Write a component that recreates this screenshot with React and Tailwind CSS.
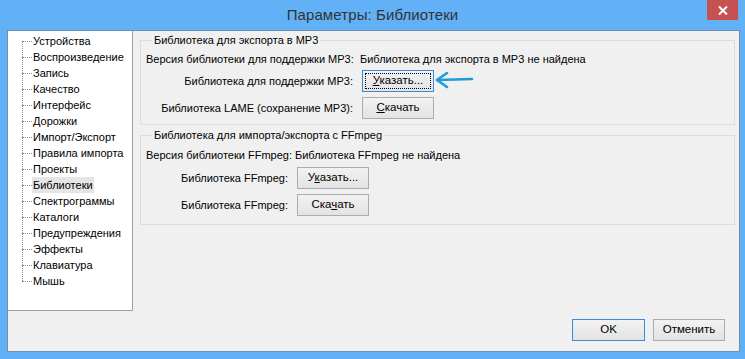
import React from "react";

const items = [
  "Устройства",
  "Воспроизведение",
  "Запись",
  "Качество",
  "Интерфейс",
  "Дорожки",
  "Импорт/Экспорт",
  "Правила импорта",
  "Проекты",
  "Библиотеки",
  "Спектрограммы",
  "Каталоги",
  "Предупреждения",
  "Эффекты",
  "Клавиатура",
  "Мышь",
];

function Btn({ children, focused, w = "w-[72px]" }) {
  return (
    <button
      className={
        (focused
          ? "border-[#3c8bd9] outline-1 outline-dotted outline-black outline-offset-[-4px] "
          : "border-[#acacac] ") +
        w +
        " h-[22px] border bg-linear-to-b from-[#f2f2f2] to-[#e3e3e3] text-[11.5px] text-black flex items-center justify-center leading-none"
      }
    >
      {children}
    </button>
  );
}

function Arrow() {
  return (
    <svg width="40" height="20" viewBox="0 0 40 20" className="ml-[1px] mt-[-3px]">
      <path
        d="M2 10 Q 18 9.5 37 9"
        fill="none"
        stroke="#1f9bd8"
        strokeWidth="2.6"
        strokeLinecap="round"
      />
      <path
        d="M12 3 L2 10 L12 17"
        fill="none"
        stroke="#1f9bd8"
        strokeWidth="2.6"
        strokeLinecap="round"
        strokeLinejoin="round"
      />
    </svg>
  );
}

export default function App() {
  return (
    <div className="w-[745px] h-[359px] bg-[#62b1f6] flex flex-col overflow-hidden font-['Liberation_Sans',sans-serif] text-[11px] text-black">
      <div className="h-[30px] relative flex items-center justify-center">
        <span className="text-[15px] text-[#333] tracking-[0.1px]">Параметры: Библиотеки</span>
        <div className="absolute right-[7px] top-0 w-[31px] h-[20px] bg-[#c75050] flex items-center justify-center">
          <svg width="10" height="9" viewBox="0 0 10 9">
            <path d="M1 0.5 L9 8.5 M9 0.5 L1 8.5" stroke="#fff" strokeWidth="2" />
          </svg>
        </div>
      </div>
      <div className="flex-1 ml-[7px] mr-[5px] mb-[7px] border border-[#6f8fb0] bg-[#f0f0f0] flex flex-col">
        <div className="flex h-[280px]">
          <div className="w-[125px] h-full bg-white border-r border-b border-[#a0a0a0] relative pt-[2px]">
            <div className="absolute left-[14px] top-[10px] h-[240px] border-l border-dotted border-[#8c8c8c]" />
            {items.map((t) => (
              <div key={t} className="h-[16px] flex items-center pl-[14px]">
                <span className="w-[10px] h-[1px] border-t border-dotted border-[#8c8c8c]" />
                <span
                  className={
                    "px-[1px] leading-[16px] whitespace-nowrap " +
                    (t === "Библиотеки" ? "bg-[#e5e5e5]" : "")
                  }
                >
                  {t}
                </span>
              </div>
            ))}
          </div>
          <div className="flex-1 flex flex-col pl-[7px] pr-[4px] pt-[1px]">
            <fieldset className="border border-[#dcdcdc] pl-[5px] pb-[5px]">
              <legend className="ml-[6px] px-[2px] leading-[16px]">Библиотека для экспорта в MP3</legend>
              <div className="flex items-center h-[16px] mt-[3px] whitespace-nowrap">
                <span className="w-[207px]">Версия библиотеки для поддержки MP3:</span>
                <span className="ml-[7px]">Библиотека для экспорта в MP3 не найдена</span>
              </div>
              <div className="flex items-center h-[22px] mt-[3px] whitespace-nowrap">
                <span className="w-[207px] text-right">Библиотека для поддержки MP3:</span>
                <div className="ml-[9px]">
                  <Btn focused>
                    <span><u>У</u>казать...</span>
                  </Btn>
                </div>
                <Arrow />
              </div>
              <div className="flex items-center h-[22px] mt-[5px] whitespace-nowrap">
                <span className="w-[207px] text-right">Библиотека LAME (сохранение MP3):</span>
                <div className="ml-[9px]">
                  <Btn>
                    <span><u>С</u>качать</span>
                  </Btn>
                </div>
              </div>
            </fieldset>
            <fieldset className="mt-[2px] border border-[#dcdcdc] pl-[5px] pb-[8px]">
              <legend className="ml-[6px] px-[2px] leading-[16px]">Библиотека для импорта/экспорта с FFmpeg</legend>
              <div className="flex items-center h-[16px] mt-[4px] whitespace-nowrap">
                <span className="w-[142px]">Версия библиотеки FFmpeg:</span>
                <span className="ml-[7px]">Библиотека FFmpeg не найдена</span>
              </div>
              <div className="flex items-center h-[22px] mt-[4px] whitespace-nowrap">
                <span className="w-[142px] text-right">Библиотека FFmpeg:</span>
                <div className="ml-[9px]">
                  <Btn>
                    <span>У<u>к</u>азать...</span>
                  </Btn>
                </div>
              </div>
              <div className="flex items-center h-[22px] mt-[5px] whitespace-nowrap">
                <span className="w-[142px] text-right">Библиотека FFmpeg:</span>
                <div className="ml-[9px]">
                  <Btn>
                    <span>Ска<u>ч</u>ать</span>
                  </Btn>
                </div>
              </div>
            </fieldset>
          </div>
        </div>
        <div className="flex justify-end gap-[8px] pr-[14px] mt-[8px]">
          <Btn focused={false} w="w-[73px] !border-[#3c8bd9]">OK</Btn>
          <Btn>Отменить</Btn>
        </div>
      </div>
    </div>
  );
}
